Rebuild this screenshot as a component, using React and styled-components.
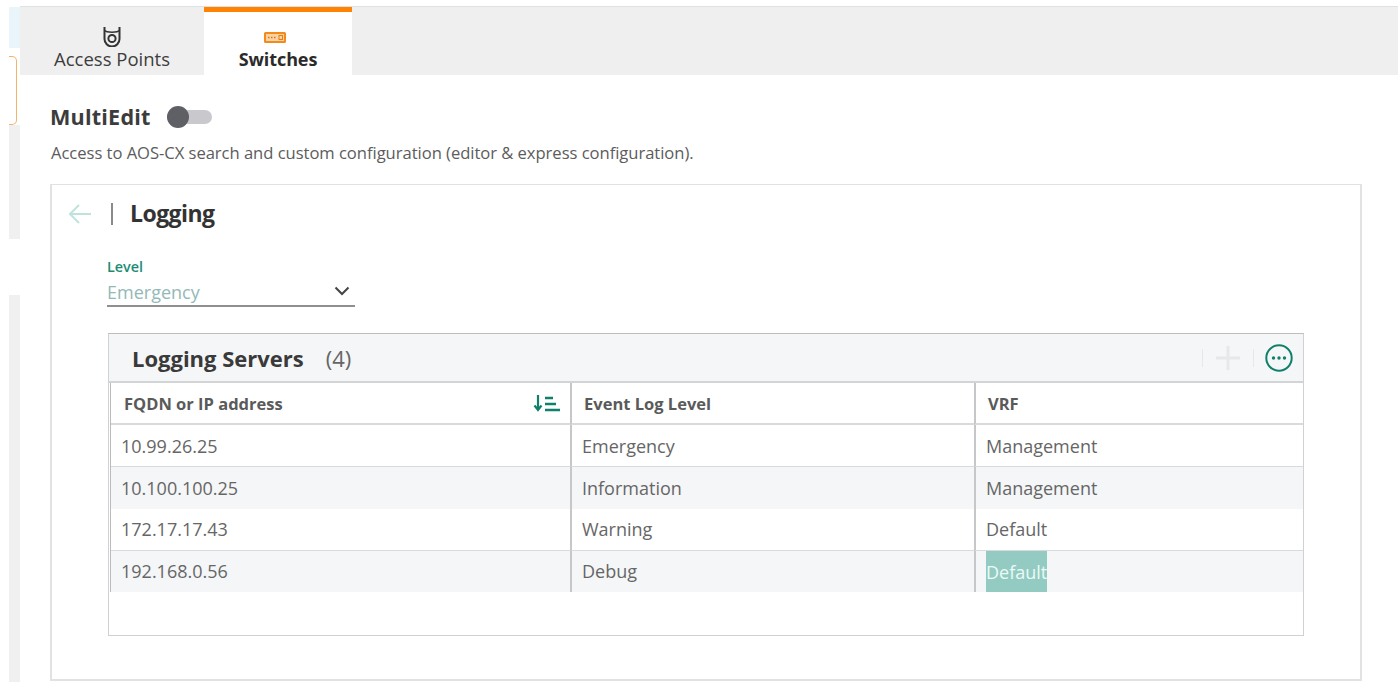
import React from "react";
import styled, { createGlobalStyle } from "styled-components";

const Global = createGlobalStyle`
  html, body { margin: 0; padding: 0; background: #fff; overflow: hidden; }
  body { font-family: "Open Sans", "Liberation Sans", sans-serif; color: #3a3a3a; }
`;
const Page = styled.div`display: flex; width: 1398px; height: 682px; overflow: hidden; background: #fff;`;
const Rail = styled.aside`width: 11px; margin-left: 9px; padding-top: 7px; flex: none; display: flex; flex-direction: column;`;
const RailBlock = styled.div`
  height: ${p => p.$h}px; flex: none; background: ${p => p.$bg || "transparent"};
  margin-bottom: ${p => p.$mb || 0}px;
`;
const RailCard = styled.div`
  height: 69px; width: 8px; flex: none; box-sizing: border-box; margin-bottom: 0;
  border: 1px solid #f2b36f; border-left: 0; border-radius: 0 5px 5px 0;
`;
const Main = styled.main`flex: 1; min-width: 0; display: flex; flex-direction: column; padding-top: 6px;`;
const TabBar = styled.nav`height: 69px; box-sizing: border-box; display: flex; background: #efefef; border-top: 1px solid #dfe2e4; flex: none;`;
const Tab = styled.div`
  width: ${p => p.$w}px; box-sizing: border-box; display: flex; flex-direction: column; align-items: center;
  background: ${p => p.$active ? "#fff" : "transparent"};
  border-top: 5px solid ${p => p.$active ? "#ff8300" : "transparent"};
  padding-top: ${p => p.$active ? 20 : 15}px;
  font-size: ${p => p.$active ? 18 : 18.5}px; line-height: 24px; font-weight: ${p => p.$active ? 700 : 400};
  color: ${p => p.$active ? "#2b2b2b" : "#3d3d3d"};
  letter-spacing: ${p => p.$active ? "-0.1px" : "0"};
`;
const TabIcon = styled.svg`display: block; flex: none; margin-bottom: ${p => p.$mb}px; margin-right: ${p => p.$mr || 0}px;`;
const Content = styled.div`flex: 1; padding: 27px 36px 0 30px; display: flex; flex-direction: column;`;
const HeadRow = styled.div`display: flex; align-items: center; gap: 16px; height: 30px;`;
const PageTitle = styled.h1`margin: 0; font-size: 21.6px; line-height: 30px; font-weight: 700; color: #3c3c3c; letter-spacing: 0.2px;`;
const Toggle = styled.div`position: relative; width: 45px; height: 14px; background: #c9c9cd; border-radius: 7px;`;
const Knob = styled.span`position: absolute; left: 0; top: -4px; width: 22px; height: 22px; border-radius: 50%; background: #5f6066;`;
const Desc = styled.p`margin: 9px 0 0 1px; font-size: 16.6px; line-height: 24px; color: #5c5c5c; letter-spacing: -0.04px;`;
const Panel = styled.section`
  margin-top: 19px; height: 497px; box-sizing: border-box; border: 2px solid #e2e2e2; border-width: 1px 2px 2px 2px;
  padding: 13px 0 0 16px; display: flex; flex-direction: column;
`;
const PanelHead = styled.div`display: flex; align-items: center; height: 32px;`;
const Divider = styled.span`width: 2px; height: 22px; background: #8a8a8a; margin: 0 17px 0 19px;`;
const PanelTitle = styled.h2`margin: 0 0 2px; font-size: 23px; line-height: 32px; font-weight: 700; color: #333; letter-spacing: -0.55px;`;
const Field = styled.div`width: 248px; margin: 28px 0 0 39px; flex: none;`;
const FieldLabel = styled.label`display: block; font-size: 14.4px; line-height: 18px; font-weight: 600; color: #1d8c74;`;
const FieldControl = styled.div`
  height: 31px; box-sizing: border-box; display: flex; align-items: center; justify-content: space-between;
  padding: 2px 5px 0 0; border-bottom: 2px solid #8f8f8f;
  font-size: 18px; color: #93b9b7;
`;
const Chevron = styled.svg`margin-bottom: 2px; flex: none;`;
const TableCard = styled.div`
  margin: 26px 0 0 40px; width: 1196px; height: 303px; box-sizing: border-box;
  border: 1px solid #cfd2d4; border-top-color: #bdbdbd; display: flex; flex-direction: column; flex: none;
`;
const TableHead = styled.div`
  height: 49px; flex: none; box-sizing: border-box; background: #f5f6f8; border-bottom: 2px solid #d2d4d6;
  display: flex; align-items: center; padding: 0 10px 0 23px;
`;
const TableTitle = styled.h3`margin: 0; font-size: 22px; font-weight: 700; color: #3a3a3a;`;
const Count = styled.span`margin-left: 22px; font-size: 22px; color: #666;`;
const Actions = styled.div`margin-left: auto; display: flex; align-items: center; gap: 12px;`;
const Sep = styled.span`width: 1px; height: 18px; background: #e6e8ea;`;
const MoreIcon = styled.svg`margin-left: -1px; flex: none;`;
const Table = styled.div`display: grid; grid-template-columns: 459px 404px 1fr; margin-left: 1px; border-left: 1px solid #bbb;`;
const HeadCell = styled.div`
  height: 42px; box-sizing: border-box; display: flex; align-items: center; justify-content: space-between;
  padding: 0 9px 0 ${p => p.$first ? 13 : 12}px; font-size: 16.5px; font-weight: 700; color: #5a5a5a;
  border-bottom: 2px solid #d9dadc; border-left: ${p => p.$first ? "none" : "2px solid #c6c7c9"};
`;
const Cell = styled.div`
  height: ${p => p.$h}px; box-sizing: border-box; display: flex; align-items: center;
  padding-left: 10px; padding-bottom: ${p => p.$lift ? 2 : 0}px; font-size: 18px; color: #666;
  background: ${p => p.$alt ? "#f5f6f8" : "#fff"};
  border-bottom: ${p => p.$line ? "1px solid #d9dadc" : "none"};
  border-left: ${p => p.$first ? "none" : "2px solid #c6c7c9"};
`;
const Selected = styled.span`
  display: flex; align-items: center; height: 100%; background: #93cbc2; color: #eafaf7; width: 61px; overflow: hidden; white-space: nowrap;
`;

const rows = [
  { ip: "10.99.26.25", level: "Emergency", vrf: "Management", h: 42, alt: false, line: true, lift: false },
  { ip: "10.100.100.25", level: "Information", vrf: "Management", h: 42, alt: true, line: false, lift: false },
  { ip: "172.17.17.43", level: "Warning", vrf: "Default", h: 42, alt: false, line: true, lift: true },
  { ip: "192.168.0.56", level: "Debug", vrf: "Default", h: 41, alt: true, line: false, lift: true, selected: true },
];

export default function App() {
  return (
    <Page>
      <Global />
      <Rail>
        <RailBlock $h={41} $bg="#eaf4fb" $mb={8} />
        <RailCard />
        <RailBlock $h={114} $bg="#f0f0f0" $mb={56} />
        <RailBlock $h={387} $bg="#f0f0f0" />
      </Rail>
      <Main>
        <TabBar>
          <Tab $w={184}>
            <TabIcon $mb={0} width="20" height="20" viewBox="0 0 20 20" fill="none" stroke="#333" strokeWidth="2">
              <path d="M2.5 0v12a7.5 7.5 0 0 0 15 0V0" />
              <path d="M2.5 3.5c2 2.2 13 2.2 15 0" strokeWidth="1.5" />
              <circle cx="10" cy="11.5" r="3.6" />
            </TabIcon>
            Access Points
          </Tab>
          <Tab $w={148} $active>
            <TabIcon $mb={4} $mr={6} width="22" height="11" viewBox="0 0 22 11">
              <rect x="1" y="1" width="20" height="9" rx="0.5" fill="#fbd3a3" stroke="#f28a1c" strokeWidth="2" />
              <path d="M4 5.5h1.5M7 5.5h1.5M10 5.5h1.5" stroke="#d9740c" strokeWidth="1.5" />
              <rect x="15" y="3.5" width="3.5" height="4" fill="none" stroke="#e67f10" strokeWidth="1" />
            </TabIcon>
            Switches
          </Tab>
        </TabBar>
        <Content>
          <HeadRow>
            <PageTitle>MultiEdit</PageTitle>
            <Toggle><Knob /></Toggle>
          </HeadRow>
          <Desc>Access to AOS-CX search and custom configuration (editor &amp; express configuration).</Desc>
          <Panel>
            <PanelHead>
              <svg width="24" height="24" viewBox="0 0 24 24" fill="none" stroke="#bfe3dc" strokeWidth="2">
                <path d="M23 12H2M11 3l-9 9 9 9" />
              </svg>
              <Divider />
              <PanelTitle>Logging</PanelTitle>
            </PanelHead>
            <Field>
              <FieldLabel>Level</FieldLabel>
              <FieldControl>
                Emergency
                <Chevron width="16" height="10" viewBox="0 0 16 10" fill="none" stroke="#444" strokeWidth="2">
                  <path d="M1.5 1.5 8 8l6.5-6.5" />
                </Chevron>
              </FieldControl>
            </Field>
            <TableCard>
              <TableHead>
                <TableTitle>Logging Servers</TableTitle>
                <Count>(4)</Count>
                <Actions>
                  <Sep />
                  <svg width="26" height="26" viewBox="0 0 26 26" stroke="#e6e8ea" strokeWidth="3">
                    <path d="M13 1v24M1 13h24" />
                  </svg>
                  <Sep />
                  <MoreIcon width="28" height="28" viewBox="0 0 28 28" fill="none">
                    <circle cx="14" cy="14" r="12.7" stroke="#11806a" strokeWidth="2" />
                    <circle cx="8.5" cy="14" r="1.7" fill="#11806a" />
                    <circle cx="14" cy="14" r="1.7" fill="#11806a" />
                    <circle cx="19.5" cy="14" r="1.7" fill="#11806a" />
                  </MoreIcon>
                </Actions>
              </TableHead>
              <Table>
                <HeadCell $first>
                  FQDN or IP address
                  <svg width="28" height="18" viewBox="0 0 28 18" fill="none" stroke="#11806a" strokeWidth="2.2">
                    <path d="M5 1v14M1.5 11.5l3.5 4.5 3.5-4.5" />
                    <path d="M12 4h8M12 10h11M12 16h15" strokeWidth="2.6" />
                  </svg>
                </HeadCell>
                <HeadCell>Event Log Level</HeadCell>
                <HeadCell>VRF</HeadCell>
                {rows.map(r => (
                  <React.Fragment key={r.ip}>
                    <Cell $first $h={r.h} $alt={r.alt} $line={r.line} $lift={r.lift}>{r.ip}</Cell>
                    <Cell $h={r.h} $alt={r.alt} $line={r.line} $lift={r.lift}>{r.level}</Cell>
                    <Cell $h={r.h} $alt={r.alt} $line={r.line} $lift={r.selected ? false : r.lift}>
                      {r.selected ? <Selected>{r.vrf}</Selected> : r.vrf}
                    </Cell>
                  </React.Fragment>
                ))}
              </Table>
            </TableCard>
          </Panel>
        </Content>
      </Main>
    </Page>
  );
}
